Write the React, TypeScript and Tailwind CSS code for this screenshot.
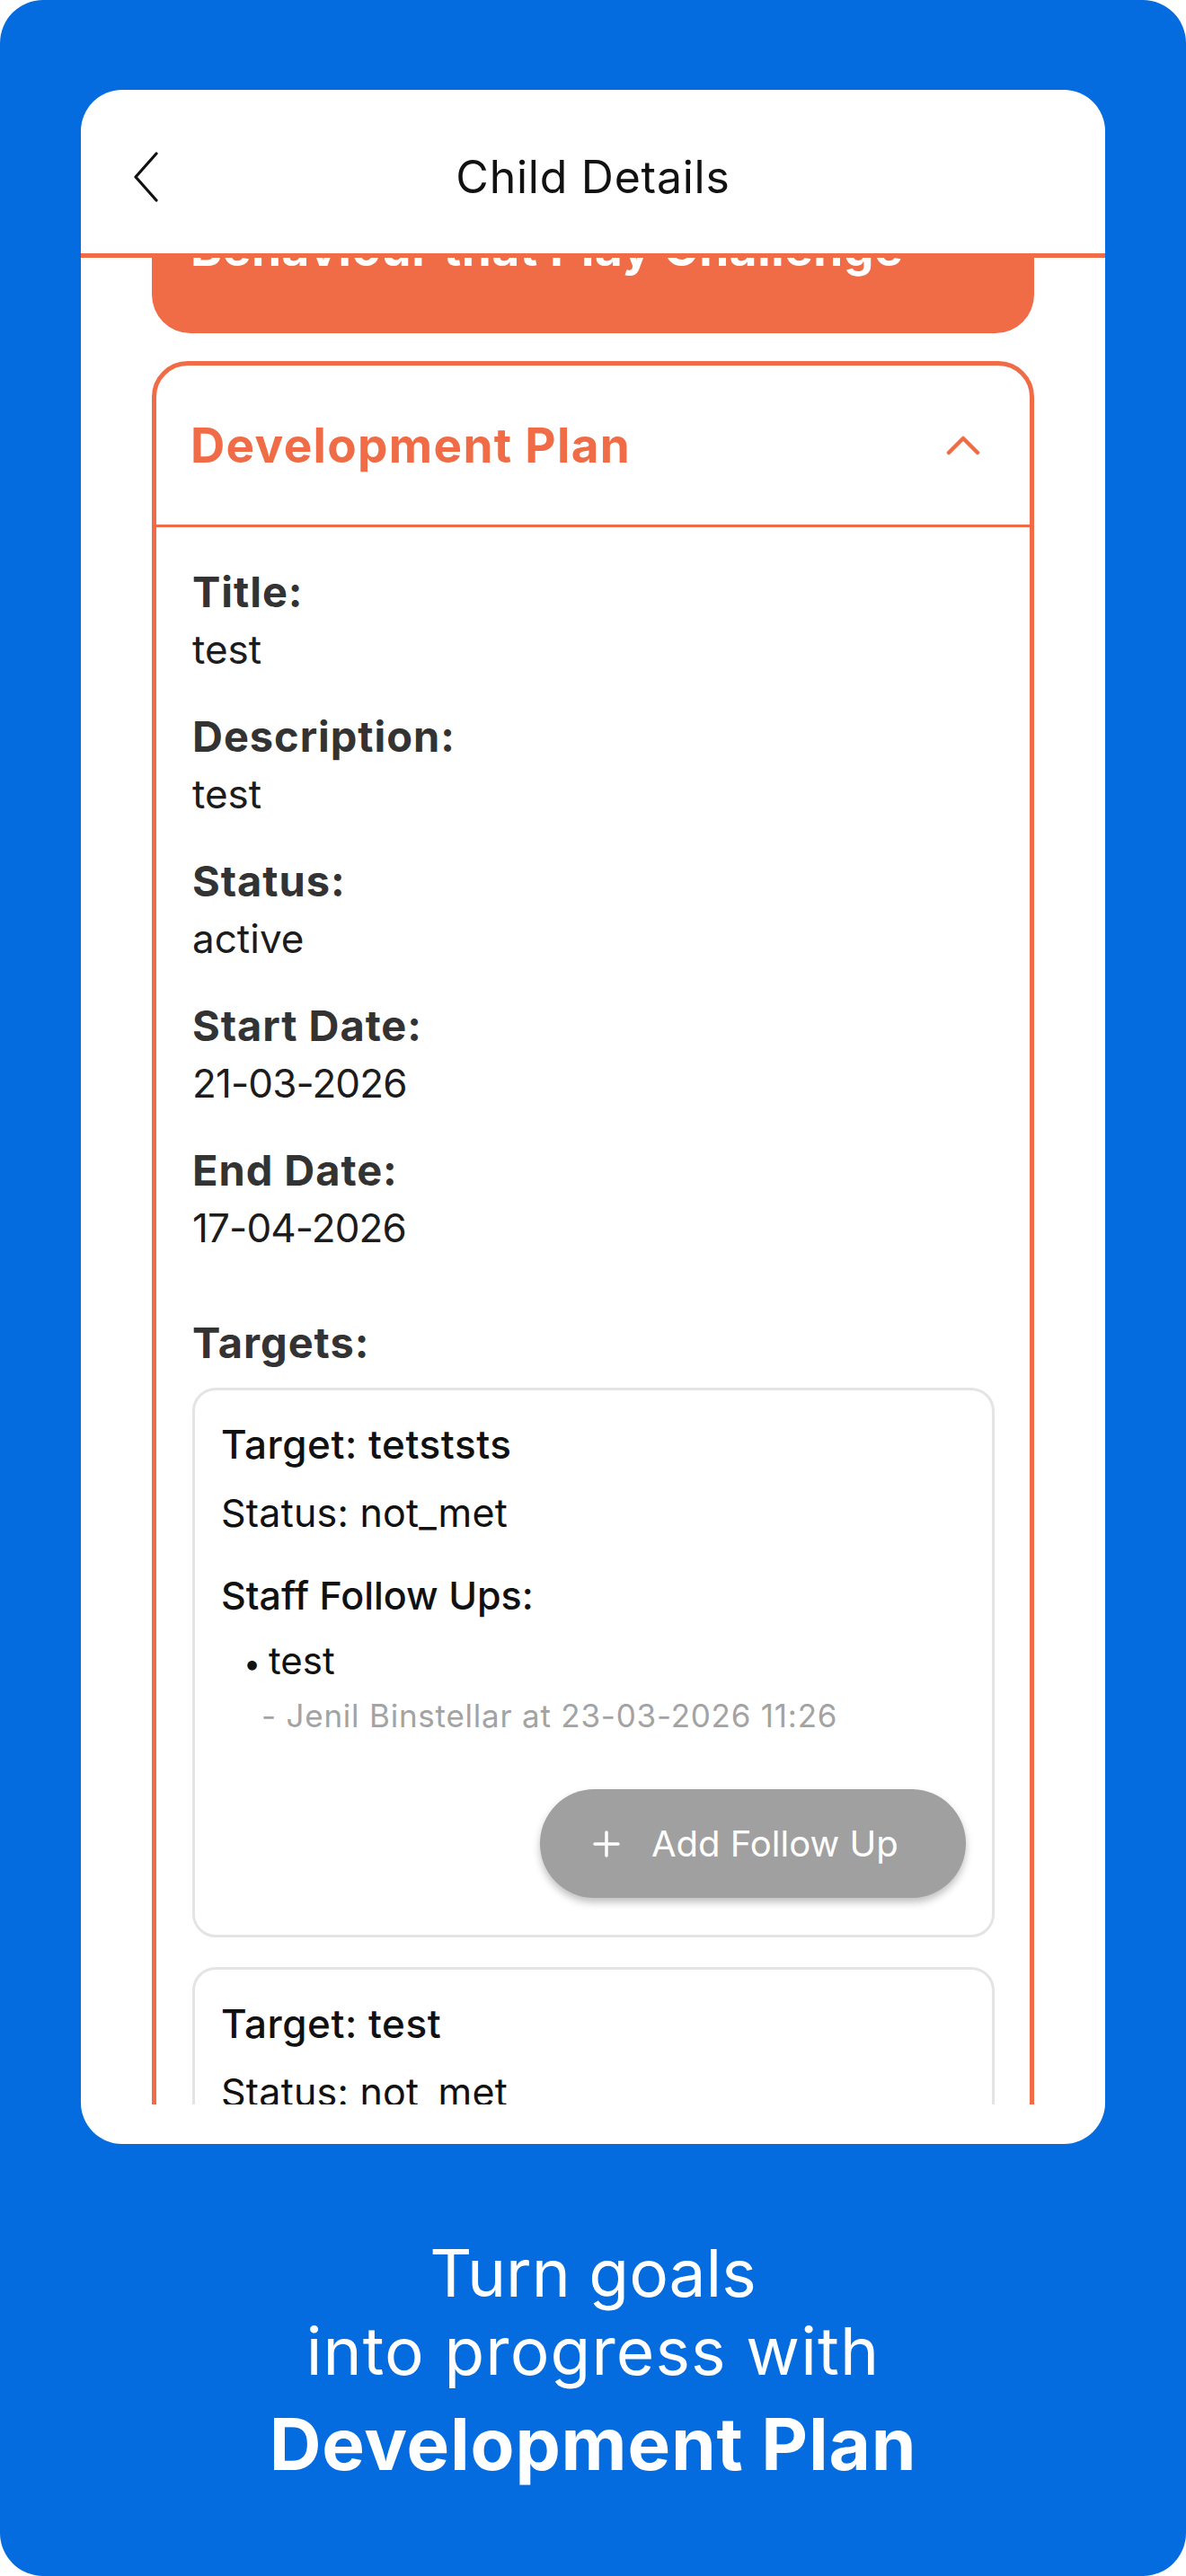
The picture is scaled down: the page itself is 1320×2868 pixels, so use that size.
import React from "react";

function Field({ label, value, last, tight }: { label: string; value: string; last?: boolean; tight?: boolean }) {
  return (
    <div className={last ? "" : "mb-[41px]"}>
      <div className="text-[47px] leading-[56px] font-bold text-[#333333] tracking-[0.02em]">{label}</div>
      <div className={"mt-[8px] text-[44px] leading-[56px] text-[#1c1c1c] " + (tight ? "tracking-[-0.02em]" : "")}>{value}</div>
    </div>
  );
}

function TargetCard({ name, withFollowUps }: { name: string; withFollowUps?: boolean }) {
  return (
    <div className="border-[3px] border-[#e4e4e4] rounded-[26px] pt-[34px] pl-[29px] pr-[29px] pb-[41px]">
      <div className="text-[44px] leading-[52px] font-medium text-[#111111] tracking-[0.012em]">Target: {name}</div>
      <div className="mt-[24px] text-[43px] leading-[52px] text-[#111111] tracking-[0.005em]">Status: not_met</div>
      {withFollowUps && (
        <>
          <div className="mt-[40px] text-[43px] leading-[52px] font-medium text-[#111111]">Staff Follow Ups:</div>
          <div className="mt-[21px] pl-[25px] flex items-baseline text-[42px] leading-[52px] text-[#111111]">
            <span className="w-[28px] text-[34px]">•</span>
            <span>test</span>
          </div>
          <div className="mt-[10px] pl-[45px] text-[35px] leading-[44px] text-[#a3a3a3] whitespace-nowrap tracking-[0.022em]">
            - Jenil Binstellar at 23-03-2026 11:26
          </div>
          <div className="mt-[60px] flex justify-end">
            <button className="h-[121px] w-[474px] rounded-full bg-[#a0a0a0] flex items-center pl-[59px] gap-[35px] shadow-[0_5px_8px_rgba(0,0,0,0.25)]">
              <svg width="30" height="30" viewBox="0 0 30 30">
                <path d="M15 2 V28 M2 15 H28" stroke="white" strokeWidth="3.5" strokeLinecap="round" />
              </svg>
              <span className="text-[40px] leading-[48px] text-white font-normal">Add Follow Up</span>
            </button>
          </div>
        </>
      )}
    </div>
  );
}

export default function App() {
  return (
    <div className="w-[1320px] h-[2868px] bg-[#056cdf] rounded-[48px] pt-[100px] px-[90px] overflow-hidden font-['Inter',sans-serif]">
      <div className="bg-white rounded-[46px] h-[2287px] flex flex-col overflow-hidden pb-[44px]">
        {/* Header */}
        <div className="h-[182px] shrink-0 pt-[12px] grid grid-cols-[1fr_auto_1fr] items-center">
          <div className="pl-[58px] flex items-center">
            <svg width="30" height="56" viewBox="0 0 30 56">
              <path d="M26 2 L3 28 L26 54" fill="none" stroke="#111111" strokeWidth="3.2" strokeLinecap="round" strokeLinejoin="round" />
            </svg>
          </div>
          <div className="text-[50px] leading-[60px] text-[#111111] tracking-[0.015em]">Child Details</div>
          <div />
        </div>
        <div className="h-[5px] shrink-0 bg-[#f06c47]" />

        {/* Scroll area */}
        <div className="flex-1 overflow-hidden px-[79px]">
          <div className="h-[160px] -mt-[76px] bg-[#f06c47] rounded-b-[43px] pt-[35px] pl-[43px] text-white font-bold text-[53px] leading-[62px] tracking-[0.012em] whitespace-nowrap">
            Behaviour that Play Challenge
          </div>

          <div className="mt-[31px] border-[5px] border-[#f06c47] rounded-[40px]">
            <div className="h-[180px] border-b-[3px] border-[#f06c47] flex items-center justify-between pl-[38px] pr-[55px]">
              <div className="text-[53px] leading-[62px] font-bold text-[#f06c47] tracking-[0.025em]">Development Plan</div>
              <svg width="38" height="24" viewBox="0 0 38 24">
                <path d="M3 20 L19 4 L35 20" fill="none" stroke="#f06c47" strokeWidth="4.5" strokeLinecap="round" strokeLinejoin="round" />
              </svg>
            </div>
            <div className="pt-[44px] pl-[40px] pr-[39px]">
              <Field label="Title:" value="test" />
              <Field label="Description:" value="test" />
              <Field label="Status:" value="active" />
              <Field label="Start Date:" value="21-03-2026" tight />
              <Field label="End Date:" value="17-04-2026" tight last />
              <div className="mt-[72px] text-[47px] leading-[56px] font-bold text-[#333333] tracking-[0.02em]">Targets:</div>
              <div className="mt-[22px]">
                <TargetCard name="tetststs" withFollowUps />
              </div>
              <div className="mt-[33px]">
                <TargetCard name="test" />
              </div>
            </div>
          </div>
        </div>
      </div>

      <div className="pt-[100px] text-center text-white">
        <div className="text-[73px] leading-[87px]">Turn goals</div>
        <div className="text-[73px] leading-[87px] tracking-[0.015em]">into progress with</div>
        <div className="text-[80px] leading-[119px] font-bold tracking-[0.01em]">Development Plan</div>
      </div>
    </div>
  );
}
